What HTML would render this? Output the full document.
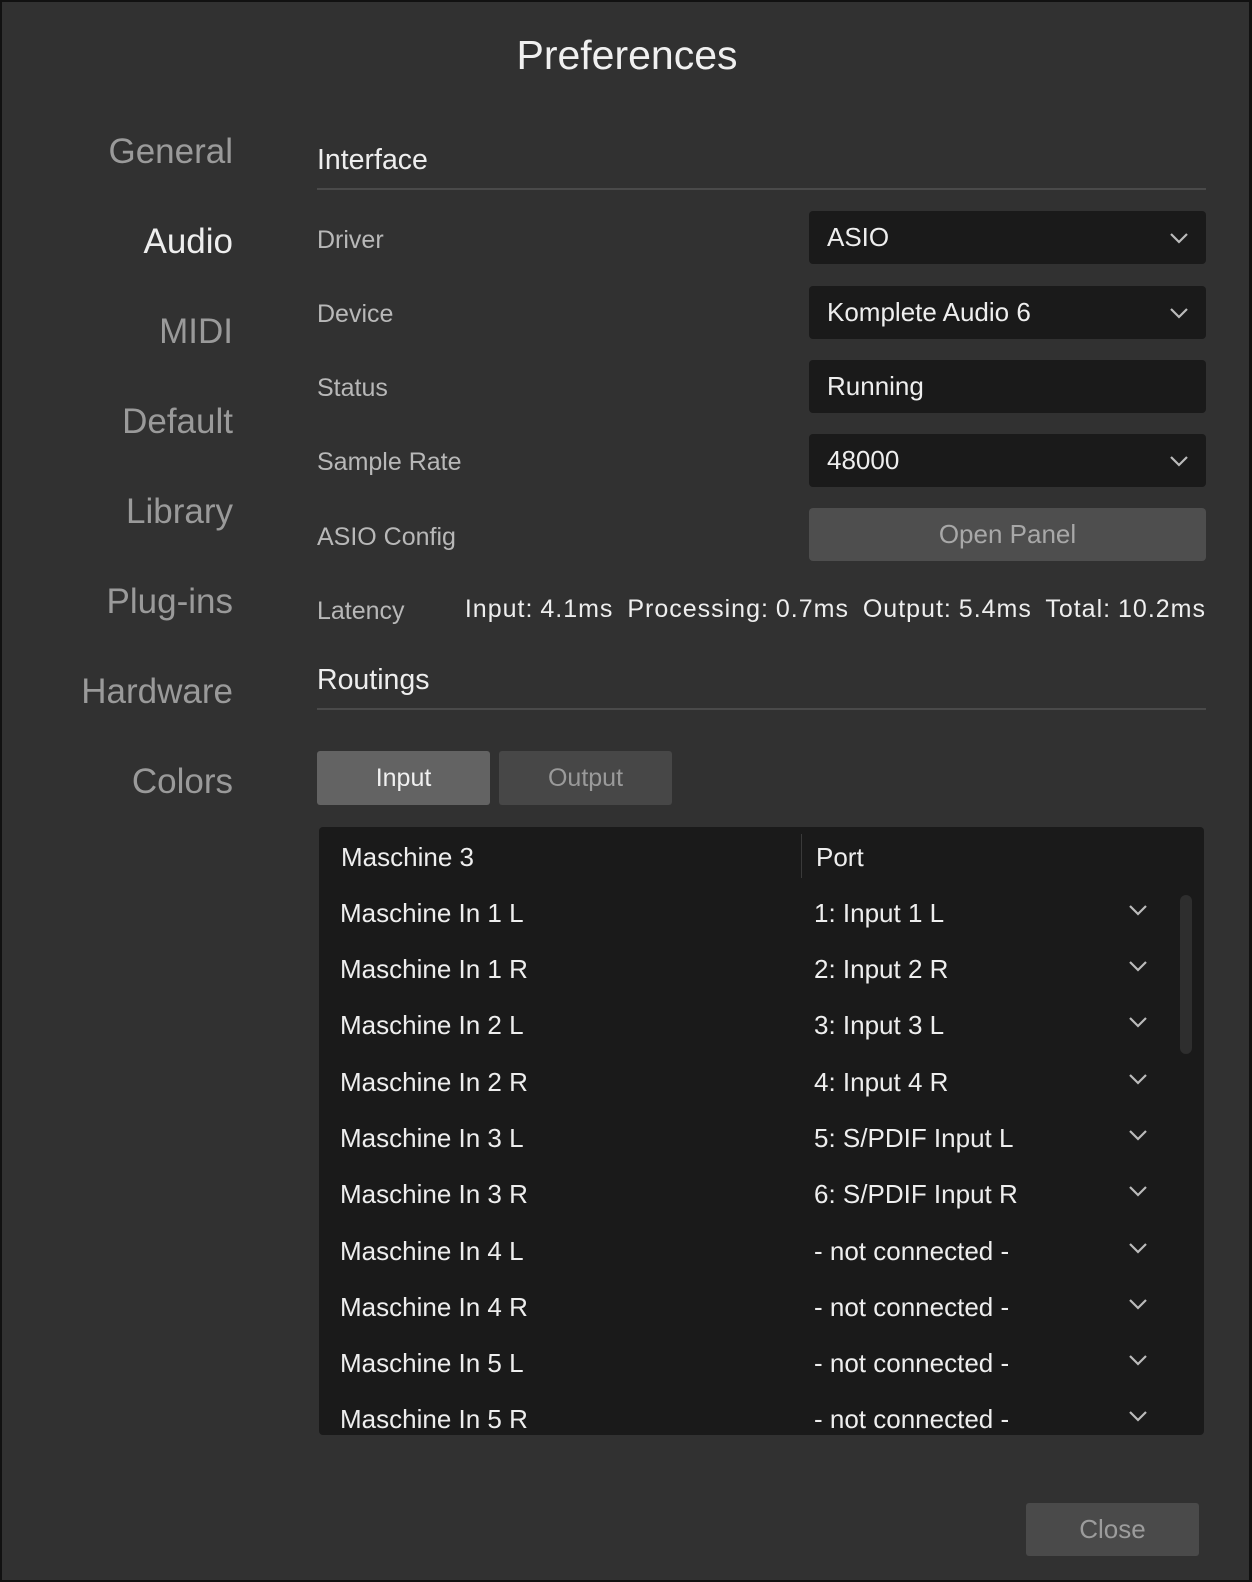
<!DOCTYPE html>
<html><head><meta charset="utf-8"><style>
*{margin:0;padding:0;box-sizing:border-box}
body{width:1252px;height:1582px;background:#313131;font-family:"Liberation Sans",sans-serif;position:relative;overflow:hidden;color:#e6e6e6}
.frame{position:absolute;left:0;top:0;width:1252px;height:1582px;border:2px solid #111;border-right:3px solid #111}
.a{position:absolute;white-space:nowrap;line-height:1}
.nav{right:1019px;font-size:35px;color:#9a9a9a;text-align:right}
.lbl{left:317px;font-size:25px;color:#b8b8b8}
.box{position:absolute;left:809px;width:397px;height:53px;background:#1a1a1a;border-radius:4px;font-size:26px;color:#eee;padding-left:18px;line-height:53px}
.chev{position:absolute;width:20px;height:12px}
.h{left:317px;font-size:28.5px;color:#eee}
.line{position:absolute;left:317px;width:889px;height:2px;background:#4a4a4a}
.row{position:absolute;left:319px;width:885px;height:56px;font-size:26px;color:#eee}
.row .l{position:absolute;left:21px;top:11px}
.row .r{position:absolute;left:495px;top:11px}
.row svg{position:absolute;left:809px;top:17px}
</style></head><body>
<div class="frame"></div>
<div class="a" style="left:0;width:1254px;text-align:center;top:35px;font-size:41px;color:#f0f0f0">Preferences</div>
<div class="a nav" style="top:134px">General</div>
<div class="a nav" style="top:224px;color:#eee">Audio</div>
<div class="a nav" style="top:314px">MIDI</div>
<div class="a nav" style="top:404px">Default</div>
<div class="a nav" style="top:494px">Library</div>
<div class="a nav" style="top:584px">Plug-ins</div>
<div class="a nav" style="top:674px">Hardware</div>
<div class="a nav" style="top:764px">Colors</div>

<div class="a h" style="top:146px">Interface</div>
<div class="line" style="top:188px"></div>

<div class="a lbl" style="top:228px">Driver</div>
<div class="a lbl" style="top:302px">Device</div>
<div class="a lbl" style="top:376px">Status</div>
<div class="a lbl" style="top:450px">Sample Rate</div>
<div class="a lbl" style="top:525px">ASIO Config</div>
<div class="a lbl" style="top:599px">Latency</div>

<div class="box" style="top:211px">ASIO<svg class="chev" style="right:17px;top:21px" viewBox="0 0 20 12"><path d="M2 2 L10 10 L18 2" fill="none" stroke="#bbb" stroke-width="2.2"/></svg></div>
<div class="box" style="top:286px">Komplete Audio 6<svg class="chev" style="right:17px;top:21px" viewBox="0 0 20 12"><path d="M2 2 L10 10 L18 2" fill="none" stroke="#bbb" stroke-width="2.2"/></svg></div>
<div class="box" style="top:360px">Running</div>
<div class="box" style="top:434px">48000<svg class="chev" style="right:17px;top:21px" viewBox="0 0 20 12"><path d="M2 2 L10 10 L18 2" fill="none" stroke="#bbb" stroke-width="2.2"/></svg></div>
<div class="box" style="top:508px;background:#4e4e4e;padding:0;text-align:center;color:#a8a8a8">Open Panel</div>

<div class="a" style="right:46px;top:597px;font-size:25px;color:#eee;letter-spacing:1px;word-spacing:-1px">Input: 4.1ms&nbsp; Processing: 0.7ms&nbsp; Output: 5.4ms&nbsp; Total: 10.2ms</div>

<div class="a h" style="top:666px">Routings</div>
<div class="line" style="top:708px"></div>

<div class="a" style="left:317px;top:751px;width:173px;height:54px;background:#636363;border-radius:3px;font-size:25px;color:#f0f0f0;text-align:center;line-height:54px">Input</div>
<div class="a" style="left:499px;top:751px;width:173px;height:54px;background:#474747;border-radius:3px;font-size:25px;color:#9a9a9a;text-align:center;line-height:54px">Output</div>

<div style="position:absolute;left:319px;top:827px;width:885px;height:608px;background:#1a1a1a;border-radius:4px;overflow:hidden">
<div class="a" style="left:22px;top:17px;font-size:26px;color:#eee">Maschine 3</div>
<div style="position:absolute;left:482px;top:7px;width:1px;height:44px;background:#3a3a3a"></div>
<div class="a" style="left:497px;top:17px;font-size:26px;color:#eee">Port</div>
<div style="position:absolute;left:861px;top:68px;width:12px;height:159px;background:#2e2e2e;border-radius:6px"></div>
</div>

<div class="row" style="top:887px"><span class="l">Maschine In 1 L</span><span class="r">1: Input 1 L</span><svg width="20" height="12" viewBox="0 0 20 12"><path d="M2 2 L10 10 L18 2" fill="none" stroke="#bbb" stroke-width="2.2"/></svg></div>
<div class="row" style="top:943px"><span class="l">Maschine In 1 R</span><span class="r">2: Input 2 R</span><svg width="20" height="12" viewBox="0 0 20 12"><path d="M2 2 L10 10 L18 2" fill="none" stroke="#bbb" stroke-width="2.2"/></svg></div>
<div class="row" style="top:999px"><span class="l">Maschine In 2 L</span><span class="r">3: Input 3 L</span><svg width="20" height="12" viewBox="0 0 20 12"><path d="M2 2 L10 10 L18 2" fill="none" stroke="#bbb" stroke-width="2.2"/></svg></div>
<div class="row" style="top:1056px"><span class="l">Maschine In 2 R</span><span class="r">4: Input 4 R</span><svg width="20" height="12" viewBox="0 0 20 12"><path d="M2 2 L10 10 L18 2" fill="none" stroke="#bbb" stroke-width="2.2"/></svg></div>
<div class="row" style="top:1112px"><span class="l">Maschine In 3 L</span><span class="r">5: S/PDIF Input L</span><svg width="20" height="12" viewBox="0 0 20 12"><path d="M2 2 L10 10 L18 2" fill="none" stroke="#bbb" stroke-width="2.2"/></svg></div>
<div class="row" style="top:1168px"><span class="l">Maschine In 3 R</span><span class="r">6: S/PDIF Input R</span><svg width="20" height="12" viewBox="0 0 20 12"><path d="M2 2 L10 10 L18 2" fill="none" stroke="#bbb" stroke-width="2.2"/></svg></div>
<div class="row" style="top:1225px"><span class="l">Maschine In 4 L</span><span class="r">- not connected -</span><svg width="20" height="12" viewBox="0 0 20 12"><path d="M2 2 L10 10 L18 2" fill="none" stroke="#bbb" stroke-width="2.2"/></svg></div>
<div class="row" style="top:1281px"><span class="l">Maschine In 4 R</span><span class="r">- not connected -</span><svg width="20" height="12" viewBox="0 0 20 12"><path d="M2 2 L10 10 L18 2" fill="none" stroke="#bbb" stroke-width="2.2"/></svg></div>
<div class="row" style="top:1337px"><span class="l">Maschine In 5 L</span><span class="r">- not connected -</span><svg width="20" height="12" viewBox="0 0 20 12"><path d="M2 2 L10 10 L18 2" fill="none" stroke="#bbb" stroke-width="2.2"/></svg></div>
<div class="row" style="top:1393px;height:42px;overflow:hidden"><span class="l">Maschine In 5 R</span><span class="r">- not connected -</span><svg width="20" height="12" viewBox="0 0 20 12"><path d="M2 2 L10 10 L18 2" fill="none" stroke="#bbb" stroke-width="2.2"/></svg></div>

<div class="a" style="left:1026px;top:1503px;width:173px;height:53px;background:#4a4a4a;border-radius:3px;font-size:26px;color:#9c9c9c;text-align:center;line-height:53px">Close</div>
</body></html>
